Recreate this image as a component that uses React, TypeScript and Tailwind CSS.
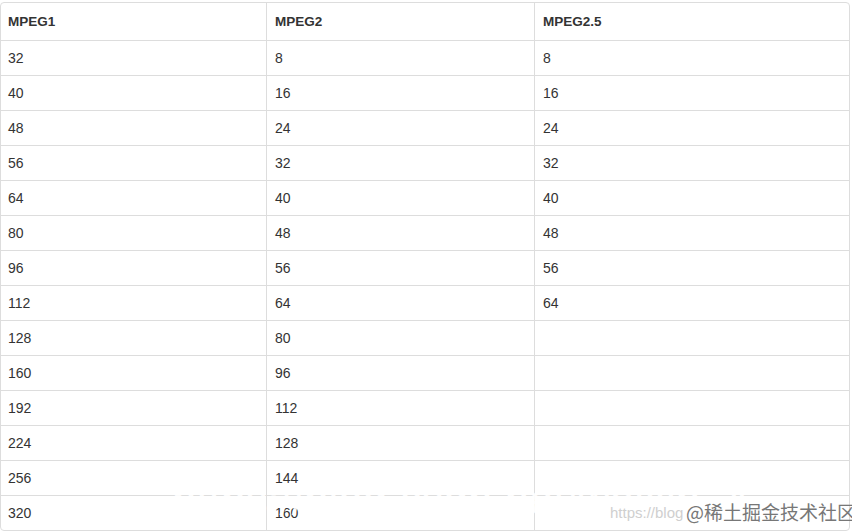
import React from "react";

const rows: [string, string, string][] = [
  ["32", "8", "8"],
  ["40", "16", "16"],
  ["48", "24", "24"],
  ["56", "32", "32"],
  ["64", "40", "40"],
  ["80", "48", "48"],
  ["96", "56", "56"],
  ["112", "64", "64"],
  ["128", "80", ""],
  ["160", "96", ""],
  ["192", "112", ""],
  ["224", "128", ""],
  ["256", "144", ""],
  ["320", "160", ""],
];

export default function App() {
  return (
    <div className="relative w-[852px] h-[531px] overflow-hidden bg-white pt-[2px] font-['Liberation_Sans',Arial,sans-serif] text-[14px] text-[#333]">
      <div className="w-[850px] border border-[#ddd] rounded-[4px] overflow-hidden">
        <div className="grid grid-cols-[266px_268px_1fr] h-[38px] border-b border-[#ddd] font-bold text-[13.5px]">
          <div className="flex items-center pl-[7px] pt-[1px] border-r border-[#ddd]">MPEG1</div>
          <div className="flex items-center pl-[8px] pt-[1px] border-r border-[#ddd]">MPEG2</div>
          <div className="flex items-center pl-[8px] pt-[1px]">MPEG2.5</div>
        </div>
        {rows.map((r, i) => (
          <div
            key={i}
            className={
              i < rows.length - 1
                ? "grid grid-cols-[266px_268px_1fr] h-[35px] border-b border-[#ddd]"
                : "grid grid-cols-[266px_268px_1fr] h-[34px]"
            }
          >
            <div className="flex items-center pl-[7px] pt-[1px] border-r border-[#ddd]">{r[0]}</div>
            <div className="flex items-center pl-[8px] pt-[1px] border-r border-[#ddd]">{r[1]}</div>
            <div className="flex items-center pl-[8px] pt-[1px]">{r[2]}</div>
          </div>
        ))}
      </div>

      {/* watermark */}
      <div className="absolute left-[172px] top-[478px] whitespace-nowrap text-[44px] leading-none text-white/90 font-['Liberation_Sans',Arial,sans-serif]">
        https://blog.csdn.net/weixin_4
      </div>
      <div className="absolute left-[610px] top-[505px] whitespace-nowrap text-[15px] leading-none text-[#cfcfcf]">
        https://blog
      </div>
      <div className="absolute left-[686px] top-[502px] whitespace-nowrap text-[19px] leading-none text-[#777] font-['Noto_Sans_CJK_SC',sans-serif]">
        @稀土掘金技术社区
      </div>
    </div>
  );
}
